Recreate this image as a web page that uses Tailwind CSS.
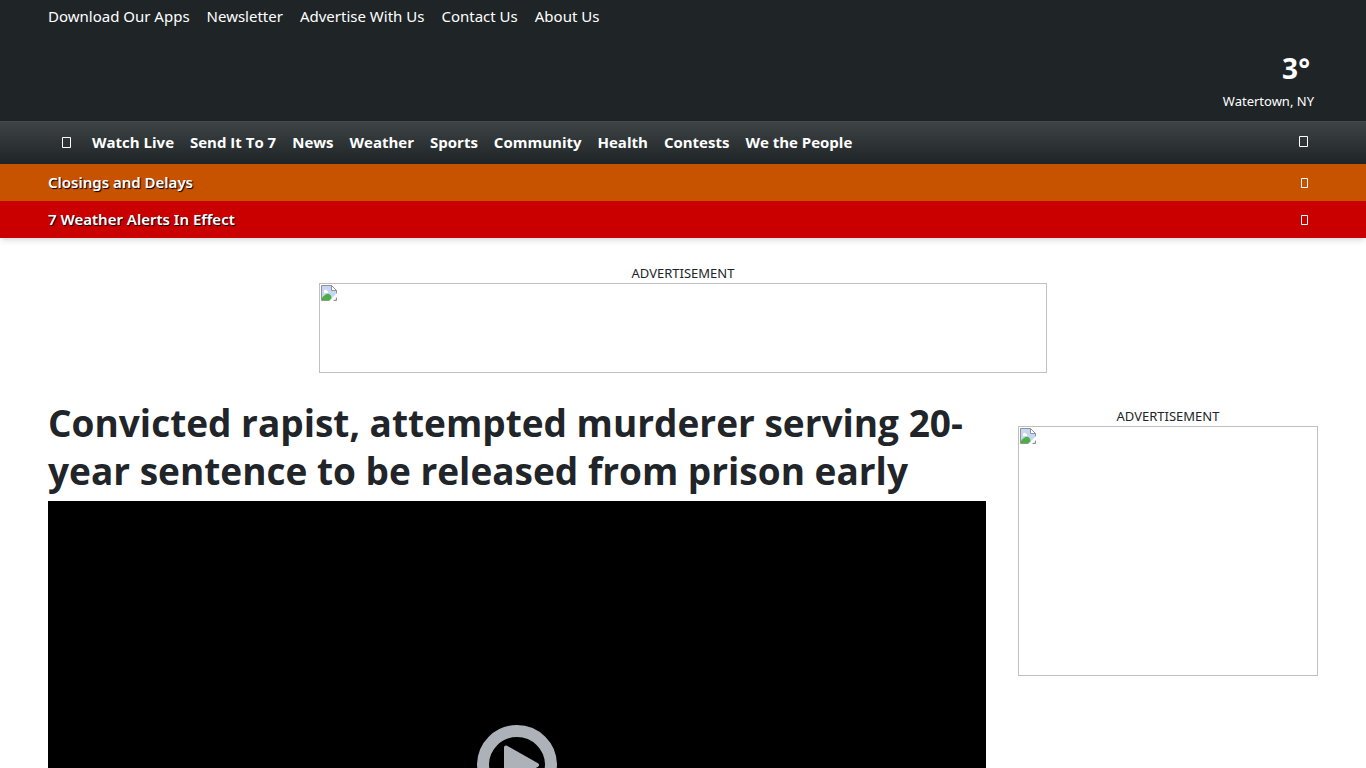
<!DOCTYPE html>
<html lang="en">
<head>
    <meta charset="UTF-8">
    <meta name="viewport" content="width=device-width, initial-scale=1.0">
    <title>Convicted rapist, attempted murderer serving 20-year sentence to be released from prison early</title>
    <script src="https://cdn.jsdelivr.net/npm/@tailwindcss/browser@4"></script>
</head>
<body class="bg-white text-[#212529] text-[15px] leading-6 font-['Noto_Sans',sans-serif]">
    <header class="text-white shadow-md">
        <div class="bg-[#1f2527] px-12 pt-1 pb-2">
            <nav aria-label="Utility">
                <ul class="flex gap-[17px]">
                    <li><a href="#">Download Our Apps</a></li>
                    <li><a href="#">Newsletter</a></li>
                    <li><a href="#">Advertise With Us</a></li>
                    <li><a href="#">Contact Us</a></li>
                    <li><a href="#">About Us</a></li>
                </ul>
            </nav>
            <a href="#" class="flex flex-col items-end pt-6 pr-1">
                <span class="pr-1 text-[28px] leading-8 font-bold">3°</span>
                <span class="pt-[5px] text-[13px] leading-6">Watertown, NY</span>
            </a>
        </div>

        <nav aria-label="Main" class="flex h-[43px] items-center justify-between border-t border-[#454b4d] bg-linear-to-b from-[#3e4446] to-[#1f2527] px-12 pb-0.5 font-['Open_Sans',sans-serif] font-bold">
            <ul class="flex items-center gap-4">
                <li>
                    <a href="#" aria-label="Home" class="flex h-6 w-7 items-center justify-end pr-1">
                        <svg class="h-3 w-3" viewBox="0 0 12 12" fill="none" stroke="currentColor"><path d="M2.5 1.5h8v10h-8z"/></svg>
                    </a>
                </li>
                <li><a href="#">Watch Live</a></li>
                <li><a href="#">Send It To 7</a></li>
                <li><a href="#">News</a></li>
                <li><a href="#">Weather</a></li>
                <li><a href="#">Sports</a></li>
                <li><a href="#">Community</a></li>
                <li><a href="#">Health</a></li>
                <li><a href="#">Contests</a></li>
                <li><a href="#">We the People</a></li>
            </ul>
            <button type="button" aria-label="Search" class="pr-2">
                <svg class="h-3 w-3" viewBox="0 0 12 12" fill="none" stroke="currentColor"><path d="M1.5 .5h8v10h-8z"/></svg>
            </button>
        </nav>

        <a href="#" class="flex h-[37px] items-center justify-between bg-[#c75300] px-12 font-semibold text-shadow-[1px_1px_1px_#000]">
            <span class="pb-0.5">Closings and Delays</span>
            <svg class="mr-2 h-3 w-3" viewBox="0 0 12 12" fill="none" stroke="currentColor"><path d="M3.5 1.5h6v9h-6z"/></svg>
        </a>
        <a href="#" class="flex h-[37px] items-center justify-between bg-[#ca0000] px-12 font-semibold text-shadow-[1px_1px_1px_#000]">
            <span class="pb-0.5">7 Weather Alerts In Effect</span>
            <svg class="mr-2 h-3 w-3" viewBox="0 0 12 12" fill="none" stroke="currentColor"><path d="M3.5 1.5h6v9h-6z"/></svg>
        </a>
    </header>

    <div class="px-12 pt-[25px]">
        <section class="text-center">
            <p class="text-[13px] leading-5">ADVERTISEMENT</p>
            <div class="mx-auto h-[90px] max-w-[728px] border border-[#c0c0c0] p-px">
                <svg class="h-4 w-4" viewBox="0 0 16 16">
                    <path d="M.5 .5h10l5 5v10H.5z" fill="#c6d7f5" stroke="#929292"/>
                    <path d="M10.5 .5v5h5z" fill="#fff" stroke="#929292"/>
                    <path d="M3 6.5a1.5 1.5 0 0 1 3-.5 1.2 1.2 0 0 1 1 2H3z" fill="#fff"/>
                    <path d="M1 15v-2c3-4 7-6 9-2l1 4z" fill="#4caf45"/>
                    <path d="M8 16l8-8v4l-4 4z" fill="#fff"/>
                </svg>
            </div>
        </section>

        <div class="flex gap-8 pt-6">
            <main class="min-w-0 flex-1">
                <h1 class="pt-0.5 font-['Open_Sans',sans-serif] text-[37px] leading-[48px] font-bold">Convicted rapist, attempted murderer serving 20-year sentence to be released from prison early</h1>
                <div class="mt-1.5 flex aspect-video items-center justify-center bg-black">
                    <button type="button" aria-label="Play video" class="h-20 w-20 text-[#adb1b8]">
                        <svg viewBox="0 0 80 80">
                            <circle cx="40" cy="40" r="34" fill="none" stroke="currentColor" stroke-width="12"/>
                            <path d="M29 22.5v35l31-17.5z" fill="currentColor" stroke="currentColor" stroke-width="4" stroke-linejoin="round"/>
                        </svg>
                    </button>
                </div>
            </main>

            <aside class="w-[300px] shrink-0 pt-[9px] text-center">
                <p class="text-[13px] leading-5">ADVERTISEMENT</p>
                <div class="h-[250px] border border-[#c0c0c0] p-px">
                    <svg class="h-4 w-4" viewBox="0 0 16 16">
                        <path d="M.5 .5h10l5 5v10H.5z" fill="#c6d7f5" stroke="#929292"/>
                        <path d="M10.5 .5v5h5z" fill="#fff" stroke="#929292"/>
                        <path d="M3 6.5a1.5 1.5 0 0 1 3-.5 1.2 1.2 0 0 1 1 2H3z" fill="#fff"/>
                        <path d="M1 15v-2c3-4 7-6 9-2l1 4z" fill="#4caf45"/>
                        <path d="M8 16l8-8v4l-4 4z" fill="#fff"/>
                    </svg>
                </div>
            </aside>
        </div>
    </div>
</body>
</html>
